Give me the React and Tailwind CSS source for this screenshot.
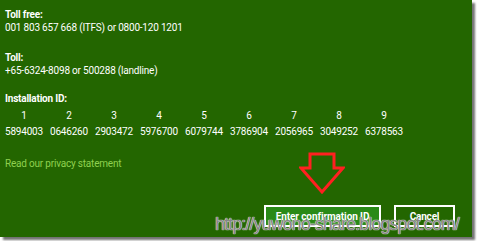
import React from "react";

const cols = [
  "5894003", "0646260", "2903472", "5976700", "6079744",
  "3786904", "2056965", "3049252", "6378563",
];

export default function App() {
  return (
    <div className="w-[477px] h-[241px] bg-white relative overflow-hidden" style={{ fontFamily: 'Roboto, "Open Sans", sans-serif' }}>
      <div className="w-[472px] h-[237px] bg-[#236600] text-white text-[10px] tracking-[-0.2px] leading-[13px] shadow-[3px_3px_2px_rgba(0,0,0,0.55)] flex flex-col pl-[5px] pt-[8px]">
        <div className="font-bold">Toll free:</div>
        <div>001 803 657 668 (ITFS) or 0800-120 1201</div>
        <div className="font-bold mt-[17px]">Toll:</div>
        <div>+65-6324-8098 or 500288 (landline)</div>
        <div className="font-bold mt-[15px]">Installation ID:</div>
        <div className="grid grid-cols-[repeat(9,45px)] mt-[4px]">
          {cols.map((id, i) => (
            <div key={id} className="flex flex-col items-center w-fit gap-[3px]">
              <span>{i + 1}</span>
              <span>{id}</span>
            </div>
          ))}
        </div>
        <div className="text-[#8fd14f] mt-[19px]">Read our privacy statement</div>
        <div className="flex justify-end gap-[13px] pr-[17px] mt-[35px]">
          <button className="h-[22px] w-[117px] border-2 border-white bg-[#2a8a17] text-white font-bold text-[10px] tracking-[-0.1px]">
            Enter confirmation ID
          </button>
          <button className="h-[22px] w-[61px] border-2 border-white text-white font-bold text-[10px]">
            Cancel
          </button>
        </div>
      </div>
      <svg className="absolute left-[299px] top-[152px]" width="46" height="42" viewBox="0 0 46 42">
        <path d="M11 2 H35 V16 H44 L23 40 L2 16 H11 Z" fill="none" stroke="#ff2020" strokeWidth="3" strokeLinejoin="miter" />
      </svg>
      <div
        className="absolute left-[215px] top-[214px] whitespace-nowrap text-[18px] leading-[20px] tracking-[-0.95px] text-[#858585] [text-shadow:0_0_1px_#ffffff,0_0_1px_#ffffff]"
        style={{ fontFamily: '"Liberation Sans", Arial, sans-serif' }}
      >
        http://yuwono-share.blogspot.com/
      </div>
    </div>
  );
}
